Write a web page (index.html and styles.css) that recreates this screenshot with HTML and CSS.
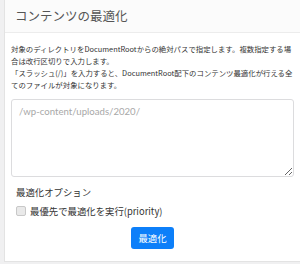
FILE: index.html
```html
<!DOCTYPE html>
<html lang="ja">
<head>
    <meta charset="UTF-8">
    <meta name="viewport" content="width=device-width, initial-scale=1.0">
    <title>コンテンツの最適化</title>
    <link rel="stylesheet" href="styles.css">
</head>
<body>

    <div class="card">
        <div class="card-header">コンテンツの最適化</div>
        <div class="card-body">
            <p class="help">
                対象のディレクトリをDocumentRootからの絶対パスで指定します。複数指定する場<br>合は改行区切りで入力します。<br>
                「スラッシュ(/)」を入力すると、DocumentRoot配下のコンテンツ最適化が行える全<br>てのファイルが対象になります。
            </p>
            <textarea class="paths" placeholder="/wp-content/uploads/2020/"></textarea>

            <div class="options">
                <div class="options-title">最適化オプション</div>
                <label class="check">
                    <input type="checkbox" id="priority">
                    <span>最優先で最適化を実行(priority)</span>
                </label>
            </div>

            <div class="actions">
                <button class="btn">最適化</button>
            </div>
        </div>
    </div>

</body>
</html>
```

FILE: styles.css
```css
body {
    margin: 0;
    background-color: #f0f0f1;
    font-family: "Noto Sans CJK JP", "Noto Sans", sans-serif;
    color: #333;
    overflow: hidden;
}

.card {
    margin-left: 4px;
    height: 261px;
    background-color: #fff;
    border-left: 1px solid #e3e3e3;
    border-bottom: 1px solid #e3e3e3;
}

.card-header {
    height: 32px;
    line-height: 32px;
    padding-left: 10px;
    font-size: 12.5px;
    color: #555;
    background-color: #fbfbfb;
    border-bottom: 1px solid #ececec;
}

.card-body {
    padding: 10px 6px 0;
    width: 283px;
}

.help {
    margin: 0 -6px 0 0;
    font-size: 7.4px;
    line-height: 12px;
    color: #333;
    white-space: nowrap;
}

.paths {
    display: block;
    box-sizing: border-box;
    width: 283px;
    height: 78px;
    margin-top: 8px;
    padding: 6px 7px;
    border: 1px solid #dcdcde;
    border-radius: 3px;
    font-family: Lato, "Noto Sans", sans-serif;
    font-size: 9.6px;
    color: #333;
}

.paths::placeholder {
    color: #a8a8a8;
}

.options {
    padding-left: 5px;
    margin-top: 9px;
}

.options-title {
    font-size: 9.4px;
    line-height: 12px;
    color: #333;
}

.check {
    display: flex;
    align-items: center;
    gap: 4px;
    margin-top: 7px;
    font-size: 9.4px;
    line-height: 12px;
}

.check input {
    appearance: none;
    margin: 0;
    width: 10px;
    height: 10px;
    border: 1px solid #c8c8c8;
    border-radius: 2px;
    background-color: #e9e9e9;
}

.actions {
    display: flex;
    justify-content: center;
    margin-top: 10px;
}

.btn {
    height: 22px;
    padding: 0 7px;
    background-color: #0d7ff9;
    color: #fff;
    border: none;
    border-radius: 3px;
    font-family: "Noto Sans CJK JP", sans-serif;
    font-size: 9.4px;
    cursor: pointer;
}
```
